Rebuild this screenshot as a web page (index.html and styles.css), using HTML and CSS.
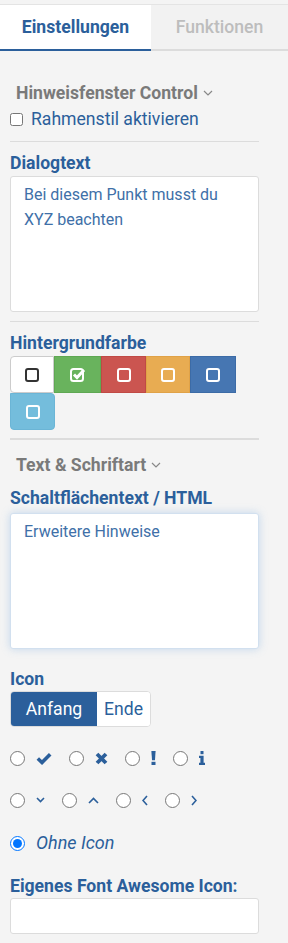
FILE: index.html
```html
<!DOCTYPE html>
<html lang="de">
<head>
  <meta charset="UTF-8">
  <meta name="viewport" content="width=device-width, initial-scale=1.0">
  <title>Einstellungen</title>
  <link rel="stylesheet" href="styles.css">
</head>
<body>
  <!-- Tabs -->
  <div class="tabs">
    <div class="tab active">Einstellungen</div>
    <div class="tab">Funktionen</div>
  </div>

  <div class="panel">
    <div class="toggle">Hinweisfenster Control
      <svg width="10" height="6" viewBox="0 0 10 6"><polyline points="1,1 5,5 9,1" fill="none" stroke="#888" stroke-width="1.2"/></svg>
    </div>
    <label class="check-row"><input type="checkbox"> Rahmenstil aktivieren</label>

    <div class="divider"></div>

    <label class="field-label" for="dialogtext">Dialogtext</label>
    <textarea id="dialogtext" class="text-box">Bei diesem Punkt musst du XYZ beachten</textarea>

    <div class="divider"></div>

    <label class="field-label">Hintergrundfarbe</label>
    <div class="swatches">
      <div class="swatch white"><span class="box"></span></div>
      <div class="swatch green">
        <svg width="16" height="15" viewBox="0 0 16 15">
          <rect x="1" y="2" width="12" height="12" rx="2.5" fill="none" stroke="#fff" stroke-width="2"/>
          <polyline points="4,7.5 7,10.5 14,3" fill="none" stroke="#fff" stroke-width="3"/>
        </svg>
      </div>
      <div class="swatch red"><span class="box"></span></div>
      <div class="swatch orange"><span class="box"></span></div>
      <div class="swatch blue"><span class="box"></span></div>
      <div class="swatch light"><span class="box"></span></div>
    </div>

    <div class="divider thick"></div>

    <div class="toggle second">Text &amp; Schriftart
      <svg width="10" height="6" viewBox="0 0 10 6"><polyline points="1,1 5,5 9,1" fill="none" stroke="#888" stroke-width="1.2"/></svg>
    </div>

    <label class="field-label button-label" for="btntext">Schaltflächentext / HTML</label>
    <textarea id="btntext" class="text-box focused">Erweitere Hinweise</textarea>

    <label class="field-label icon-label">Icon</label>
    <div class="btn-group">
      <button class="seg active">Anfang</button>
      <button class="seg">Ende</button>
    </div>

    <div class="radio-row">
      <label class="opt"><input type="radio" name="icon">
        <svg width="16" height="13" viewBox="0 0 16 13"><polyline points="1.8,6.5 6,10.5 14.2,2.3" fill="none" stroke="#2b5f9b" stroke-width="3.6"/></svg>
      </label>
      <label class="opt"><input type="radio" name="icon">
        <svg width="13" height="13" viewBox="0 0 13 13"><path d="M2,2 L11,11 M11,2 L2,11" stroke="#2b5f9b" stroke-width="3.8"/></svg>
      </label>
      <label class="opt"><input type="radio" name="icon">
        <svg width="5" height="14" viewBox="0 0 5 14"><path d="M0.4,0 H4.6 L4,9.3 H1 Z" fill="#2b5f9b"/><rect x="0.5" y="10.8" width="4" height="3.2" fill="#2b5f9b"/></svg>
      </label>
      <label class="opt"><input type="radio" name="icon">
        <svg width="6" height="14" viewBox="0 0 6 14"><rect x="1.5" y="0" width="3" height="3.2" fill="#2b5f9b"/><path d="M0,4.8 H4.6 V11.8 H6 V14 H0 V11.8 H1.4 V7 H0 Z" fill="#2b5f9b"/></svg>
      </label>
    </div>

    <div class="radio-row second-row">
      <label class="opt"><input type="radio" name="icon">
        <svg width="9" height="6" viewBox="0 0 9 6"><polyline points="1,1 4.5,4.5 8,1" fill="none" stroke="#2b5f9b" stroke-width="1.6"/></svg>
      </label>
      <label class="opt"><input type="radio" name="icon">
        <svg width="11" height="7" viewBox="0 0 11 7"><polyline points="1,6 5.5,1.5 10,6" fill="none" stroke="#2b5f9b" stroke-width="1.6"/></svg>
      </label>
      <label class="opt"><input type="radio" name="icon">
        <svg width="6" height="11" viewBox="0 0 6 11"><polyline points="5,1 1,5.5 5,10" fill="none" stroke="#2b5f9b" stroke-width="1.6"/></svg>
      </label>
      <label class="opt"><input type="radio" name="icon">
        <svg width="6" height="11" viewBox="0 0 6 11"><polyline points="1,1 5,5.5 1,10" fill="none" stroke="#2b5f9b" stroke-width="1.6"/></svg>
      </label>
    </div>

    <label class="opt none-row"><input type="radio" name="icon" checked> <em>Ohne Icon</em></label>

    <label class="field-label custom-label" for="customicon">Eigenes Font Awesome Icon:</label>
    <input type="text" id="customicon" class="text-input">
  </div>
</body>
</html>
```

FILE: styles.css
```css
/* Basic reset */
* {
  margin: 0;
  padding: 0;
  box-sizing: border-box;
}

body {
  font-family: Roboto, "Liberation Sans", sans-serif;
  font-size: 17.6px;
  line-height: 20px;
  background: #f4f4f4;
  color: #2b5f9b;
}

/* Tabs */
.tabs {
  display: flex;
  margin-top: 4px;
  border-top: 1px solid #e4e4e4;
}

.tab {
  flex: 1;
  height: 46px;
  line-height: 44px;
  text-align: center;
  font-weight: 500;
  color: #bdbdbd;
  background: #f2f2f2;
  border-bottom: 2px solid #dcdcdc;
}

.tab.active {
  flex: 0 0 151px;
  font-weight: 700;
  color: #2b5f9b;
  background: #fff;
  border-bottom-color: #2b5f9b;
}

/* Main panel */
.panel {
  padding-left: 10px;
  width: 259px;
}

.toggle {
  display: flex;
  align-items: center;
  gap: 5px;
  margin-top: 32px;
  padding-left: 6px;
  font-weight: 700;
  color: #7a7a7a;
}

.toggle.second {
  margin-top: 15px;
}

.check-row {
  display: flex;
  align-items: center;
  gap: 8px;
  margin-top: 6px;
}

.check-row input {
  width: 13px;
  height: 13px;
  margin: 0;
}

.divider {
  height: 1px;
  background: #dcdcdc;
  margin-top: 12px;
}

.text-box + .divider {
  margin-top: 9px;
}

.divider.thick {
  height: 2px;
  margin-top: 8px;
}

.field-label {
  display: block;
  margin-top: 11px;
  font-weight: 700;
  color: #2b5f9b;
}

.button-label {
  margin-top: 13px;
}

.icon-label {
  margin-top: 20px;
}

.custom-label {
  margin-top: 23px;
}

/* Text areas */
.text-box {
  display: block;
  width: 249px;
  height: 136px;
  margin-top: 3px;
  padding: 5px 13px;
  font-family: inherit;
  font-size: 16px;
  line-height: 25px;
  color: #4070a8;
  background: #fff;
  border: 1px solid #dcdcdc;
  border-radius: 3px;
  resize: none;
  outline: none;
}

.text-box.focused {
  margin-top: 5px;
  border-color: #d2e0ef;
  box-shadow: 0 0 8px rgba(102, 160, 220, 0.35);
}

/* Colour swatches */
.swatches {
  display: flex;
  flex-wrap: wrap;
  width: 249px;
  margin-top: 3px;
}

.swatch {
  width: 45px;
  height: 37px;
  display: flex;
  justify-content: center;
  align-items: center;
  border: 1px solid transparent;
}

.swatch .box {
  width: 14px;
  height: 14px;
  border: 2px solid #fff;
  border-radius: 3px;
}

.swatch.white {
  width: 44px;
  background: #fff;
  border-color: #ccc;
  border-radius: 4px 0 0 4px;
}

.swatch.white .box {
  border-color: #333;
}

.swatch.green {
  width: 47px;
  background: #69b35d;
  border-color: #5fa853;
}

.swatch.red {
  background: #cb5550;
  border-color: #c04a45;
}

.swatch.orange {
  width: 44px;
  background: #e8ac52;
  border-color: #e0a247;
}

.swatch.blue {
  width: 46px;
  background: #4676b2;
  border-color: #3c6ba6;
}

.swatch.light {
  background: #74bddc;
  border-color: #6bb5d6;
  border-radius: 0 4px 4px 4px;
}

/* Button group */
.btn-group {
  display: inline-flex;
  margin-top: 2px;
  border: 1px solid #dcdcdc;
  border-radius: 4px;
  overflow: hidden;
  background: #fff;
}

.seg {
  height: 34px;
  font-family: inherit;
  font-size: 17.6px;
  color: #2b5f9b;
  background: #fff;
  border: none;
  padding: 0 7px;
}

.seg.active {
  width: 86px;
  color: #fff;
  background: #2b5f9b;
}

/* Radio icons */
.radio-row {
  display: flex;
  gap: 17px;
  margin-top: 21px;
}

.radio-row.second-row {
  margin-top: 22px;
}

.opt {
  display: flex;
  align-items: center;
  gap: 11px;
  height: 20px;
}

.opt input {
  width: 15px;
  height: 15px;
  margin: 0;
}

.none-row {
  margin-top: 23px;
  gap: 11px;
}

.none-row em {
  font-size: 18px;
  color: #2b5f9b;
}

/* Text input */
.text-input {
  display: block;
  width: 249px;
  height: 36px;
  margin-top: 2px;
  padding: 0 10px;
  font-family: inherit;
  font-size: 16px;
  background: #fff;
  border: 1px solid #dcdcdc;
  border-radius: 3px;
}
```
